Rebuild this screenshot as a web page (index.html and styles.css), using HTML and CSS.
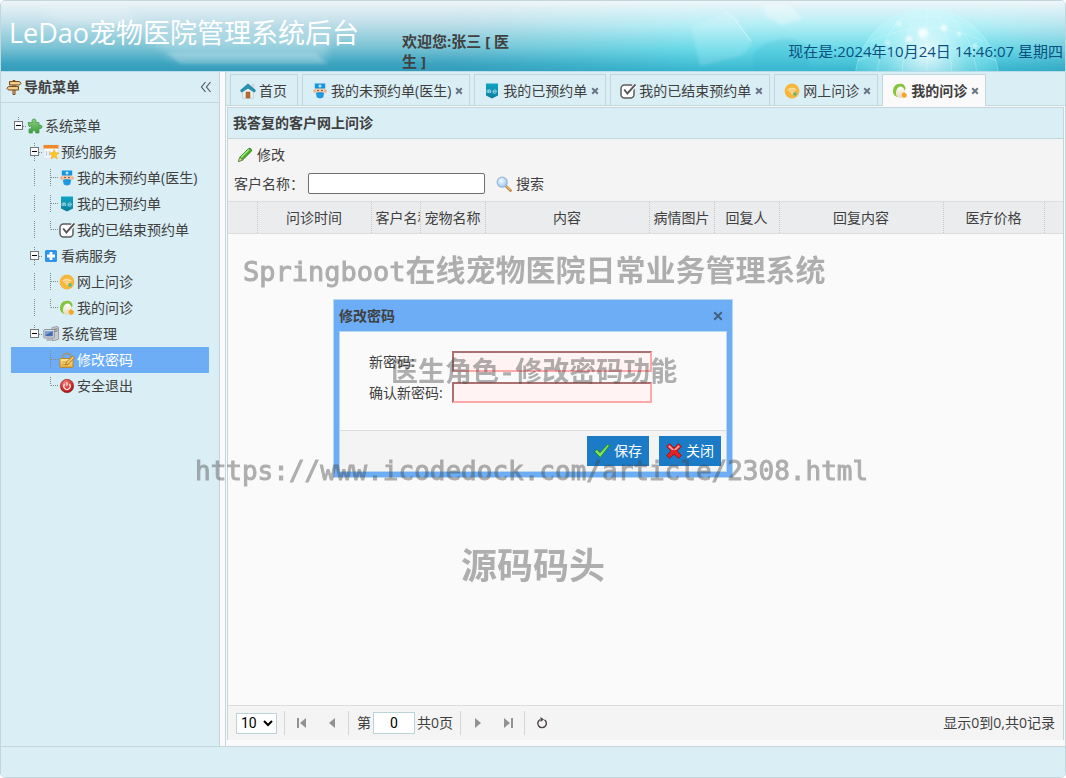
FILE: index.html
```html
<!DOCTYPE html>
<html lang="zh-CN">
<head>
<meta charset="utf-8">
<title>LeDao宠物医院管理系统后台</title>
<link rel="stylesheet" href="styles.css">
</head>
<body>
<svg class="defs" aria-hidden="true">
  <defs>
    <linearGradient id="gTeal" x2="0" y2="1"><stop offset="0" stop-color="#12a3c4"/><stop offset="1" stop-color="#087e9c"/></linearGradient>
    <linearGradient id="gGreen" x2="0" y2="1"><stop offset="0" stop-color="#8bd27c"/><stop offset="1" stop-color="#3f9e43"/></linearGradient>
    <linearGradient id="gGold" x2="0" y2="1"><stop offset="0" stop-color="#fff0a0"/><stop offset="1" stop-color="#eeb23a"/></linearGradient>
    <linearGradient id="gEgg" x2="0" y2="1"><stop offset="0" stop-color="#fff"/><stop offset="1" stop-color="#e6d9bd"/></linearGradient>
    <radialGradient id="gRed" cx=".4" cy=".3" r=".8"><stop offset="0" stop-color="#f08a84"/><stop offset=".6" stop-color="#cc2a28"/><stop offset="1" stop-color="#8d1012"/></radialGradient>
    <radialGradient id="gLens" cx=".4" cy=".35" r=".7"><stop offset="0" stop-color="#f4fbff"/><stop offset="1" stop-color="#8fc6f2"/></radialGradient>
  </defs>
  <symbol id="i-sign" viewBox="0 0 16 16"><g fill="#e9bd79" stroke="#7c4f1c"><path d="M7 1.500h2v14H7z"/><path d="M3.500 2.500h10l1.500 1.800-1.500 1.700h-10z"/><path d="M12.500 7.500h-10L.8 9.300l1.700 1.700h10z"/></g><path d="M5 4.200h8M3 9.200h8" stroke="#f7dfae"/></symbol>
  <symbol id="i-puzzle" viewBox="0 0 16 16"><path d="M1 4.500h4.500C4.600 3 5 1 7 1s2.500 2 1.600 3.500H12v3c1.200-.8 3-.4 3 1.300s-1.700 2.200-3 1.400V15H8.600c.5-1.500-.3-2.400-1.600-2.400S5 13.500 5.500 15H2v-4.200c1.400.7 2.300 0 2.300-1.200S3.200 7.900 2 8.500z" fill="url(#gGreen)" stroke="#3c9343" stroke-width=".7"/></symbol>
  <symbol id="i-cal" viewBox="0 0 16 16"><path d="M1 1h14v13H1z" fill="#f8fafc" stroke="#d5dde5" stroke-width=".6"/><path d="M.5 1h15v3.500H.5z" fill="#ee8a2c"/><path d="M3.500 7v5M6.500 7v5" stroke="#c3cbe8" stroke-width="1.500"/><path d="M11.200 5.500l1.400 3.100 3.300.4-2.500 2.300.7 3.500-2.900-1.700-3.100 1.700.7-3.500L6.400 9l3.400-.4z" fill="#fbc523" stroke="#efa51d" stroke-width=".5"/></symbol>
  <symbol id="i-doc" viewBox="0 0 16 16"><circle cx="3" cy="8" r="1.800" fill="#f0a982"/><circle cx="13" cy="8" r="1.800" fill="#f0a982"/><path d="M3.500 5h9v4.500c0 1.500-2 2-4.500 2s-4.500-.5-4.500-2z" fill="#fac9a4"/><path d="M2.800.5h10.400v5H2.800z" fill="#1495e4"/><path d="M8 1.500v3M6.500 3h3" stroke="#fff"/><circle cx="6" cy="7.500" r=".8" fill="#444"/><circle cx="10" cy="7.500" r=".8" fill="#444"/><path d="M3.800 10c3-1.200 5.400-1.200 8.400 0l-1 4.500-3.200 1-3.200-1z" fill="#1f9ae2"/></symbol>
  <symbol id="i-me" viewBox="0 0 16 16"><path d="M2 .5h12v12L8 15.500l-6-3z" fill="url(#gTeal)"/><path d="M3.200 10V7.500c0-1 1.700-1 1.700 0V10 7.500c0-1 1.700-1 1.700 0V10M9 8.700h3.500c0-2.500-3.500-2.500-3.500 0s2.500 1.500 3.300 1" fill="none" stroke="#b7e4ee" stroke-width=".8"/></symbol>
  <symbol id="i-check" viewBox="0 0 16 16"><rect x="1" y="2" width="13" height="13" rx="3.500" fill="#fff" stroke="#5c5c5c" stroke-width="1.500"/><path d="M4.200 6.800l3.300 4L15.500 1.500" fill="none" stroke="#fff" stroke-width="4"/><path d="M4.200 6.500l3.200 4L15.500 1.500" fill="none" stroke="#555" stroke-width="1.900"/></symbol>
  <symbol id="i-plus" viewBox="0 0 16 16"><rect x="2" y="2" width="12" height="12" rx="1.500" fill="#2f93ea"/><path d="M8 4v8M4 8h8" stroke="#fff" stroke-width="2.800"/></symbol>
  <symbol id="i-wifi" viewBox="0 0 16 16"><circle cx="8" cy="8" r="7.400" fill="#f6b73c"/><path d="M3.500 6.500c2.500-2.300 6.500-2.300 9 0L8 11.500z" fill="#fde2a0"/><path d="M4.600 8c2-1.600 4.800-1.600 6.800 0M6 9.500c1.200-.8 2.800-.8 4 0" stroke="#f1b851" fill="none" stroke-width=".8"/><circle cx="11" cy="11" r="1.800" fill="#57b98c"/></symbol>
  <symbol id="i-egg" viewBox="0 0 16 16"><path d="M1 8.500C1 3.500 4 .8 8 .8c3.500 0 5.500 2 5.500 5.200L10 13l-5 1C2.500 13 1 11 1 8.500z" fill="#86c440"/><path d="M4 10c0-3.500 2-6.500 4.500-6.500S13 6.500 13 10s-2 4.800-4.500 4.800S4 13.500 4 10z" fill="url(#gEgg)"/><path d="M9.500 11l2.500-2 3 2.500-.7 2.500-2.500 1-1.800-1.500z" fill="#f6a528"/></symbol>
  <symbol id="i-pc" viewBox="0 0 16 16"><path d="M9 1.500l5-1 1.500.8v12l-4 1.200H9z" fill="#c9ccd0" stroke="#83878d" stroke-width=".7"/><path d="M10.500 3.500l4-.7M10.500 5.500l4-.7" stroke="#777"/><rect x=".8" y="3.500" width="10.500" height="8.500" rx=".8" fill="#dadde1" stroke="#7d8289" stroke-width=".8"/><path d="M2.300 5h7.500v5.300H2.300z" fill="#456cae"/><path d="M2.300 5h7.500L2.300 9z" fill="#7fa4d9"/><path d="M4.500 12h3l1.500 2.800H3z" fill="#aeb2b8"/></symbol>
  <symbol id="i-lock" viewBox="0 0 16 16"><path d="M3.500 7V5.500c0-5 8-5.500 8.500-.5V7" fill="none" stroke="#9a9a8c" stroke-width="1.800"/><rect x="1" y="6.500" width="13" height="8.800" rx=".8" fill="url(#gGold)" stroke="#bf8424"/><path d="M3 10h5M3 12.500h4" stroke="#d59a35"/><path d="M6.500 13l1-3L13.500 4l2 1.800-6 6.300z" fill="#f2c56b" stroke="#9c661b" stroke-width=".8"/></symbol>
  <symbol id="i-power" viewBox="0 0 16 16"><circle cx="8" cy="8" r="6.700" fill="url(#gRed)" stroke="#962323" stroke-width=".6"/><path d="M5.700 6a3.200 3.200 0 1 0 4.600 0M8 4.200v3.600" fill="none" stroke="#fbe5e3" stroke-width="1.200"/></symbol>
  <symbol id="i-home" viewBox="0 0 16 16"><path d="M12 1.500h2V6h-2z" fill="#dfe4e6" stroke="#b0b9bd" stroke-width=".4"/><path d="M2.800 8L8 3.500 13.200 8v7.300H2.800z" fill="#eef2f3" stroke="#b2bcc0" stroke-width=".6"/><path d="M8 .8L.2 7.600l1.500 1.600L8 5.300l6.300 3.900 1.500-1.600z" fill="#2594b4" stroke="#167391" stroke-width=".5"/><path d="M6 9h4v6H6z" fill="#b96d31" stroke="#935020" stroke-width=".5"/></symbol>
  <symbol id="i-pencil" viewBox="0 0 16 16"><path d="M1.500 14.500l1.200-4L11.500 1.700c1.300-1.300 4 1 2.800 2.600L5.500 13z" fill="#4caf2c" stroke="#217516" stroke-width=".9"/><path d="M4 10.500l8-8" stroke="#a8e67e" stroke-width="1.500"/><path d="M1.500 14.500l1.200-4L5.500 13z" fill="#e6dfb2" stroke="#56772c" stroke-width=".5"/></symbol>
  <symbol id="i-search" viewBox="0 0 16 16"><path d="M10 10l4.500 4.500" stroke="#b98040" stroke-width="2.600" stroke-linecap="round"/><path d="M10.500 10l4 4" stroke="#eeb46a" stroke-width="1.300"/><circle cx="6.200" cy="6.200" r="5" fill="url(#gLens)" stroke="#9db8d8" stroke-width="1.300"/></symbol>
  <symbol id="i-ok" viewBox="0 0 16 16"><path d="M.6 8.500L3 6.500l3 3.200L13.500 1.500l2.200.8L6.300 14.500z" fill="#86e25d" stroke="#168421" stroke-width=".9"/></symbol>
  <symbol id="i-no" viewBox="0 0 16 16"><path d="M3.500.7L8 5 12.500.7l2.800 2.800L11 8l4.300 4.500-2.800 2.800L8 11l-4.500 4.300L.7 12.500 5 8 .7 3.500z" fill="#e32528" stroke="#9e1015" stroke-width=".9" stroke-linejoin="round"/><path d="M3.500 2.200L8 6.800l4.500-4.600 1.300 1.300L10 7H6L2.200 3.500z" fill="#f6a6a4"/></symbol>
  <symbol id="i-x" viewBox="0 0 8 8"><path d="M1.200 1.200l5.600 5.600M6.800 1.200L1.200 6.800" stroke="currentColor" stroke-width="2"/></symbol>
  <symbol id="i-x-thin" viewBox="0 0 8 8"><path d="M1 1l6 6M7 1L1 7" stroke="currentColor" stroke-width="1.500"/></symbol>
  <symbol id="t-box" viewBox="0 0 16 18"><path d="M7.500 0v5M7.500 13v5M12 9.500h4" class="dots"/><rect x="3.500" y="4.500" width="8" height="8" fill="#f7fbfc" stroke="#777"/><path d="M5 8.500h5" stroke="#000"/></symbol>
  <symbol id="t-root" viewBox="0 0 16 18"><path d="M7.500 0v4M12 9.500h4" class="dots"/><rect x="3.500" y="4.500" width="8" height="8" fill="#f7fbfc" stroke="#777"/><path d="M5 8.500h5" stroke="#000"/></symbol>
  <symbol id="t-line" viewBox="0 0 16 18"><path d="M7.500 0v18" class="dots"/></symbol>
  <symbol id="t-join" viewBox="0 0 16 18"><path d="M7.500 0v18M8 8.500h8" class="dots"/></symbol>
  <symbol id="t-end" viewBox="0 0 16 18"><path d="M7.500 0v8.500M8 8.500h8" class="dots"/></symbol>
</svg>

<div class="app">
  <header class="banner">
    <svg class="banner-art" viewBox="0 0 1064 70" preserveAspectRatio="none" aria-hidden="true">
      <defs>
        <linearGradient id="skyL" x2="0" y2="1"><stop offset="0" stop-color="#eef5f9"/><stop offset=".3" stop-color="#c3e0ea"/><stop offset=".65" stop-color="#7cc4d5"/><stop offset=".9" stop-color="#3ba3c0"/><stop offset="1" stop-color="#359cba"/></linearGradient>
        <linearGradient id="skyR" x2="0" y2="1"><stop offset="0" stop-color="#eef5f9"/><stop offset=".35" stop-color="#b2eef5"/><stop offset=".7" stop-color="#65d8e7"/><stop offset="1" stop-color="#38b6cf"/></linearGradient>
        <linearGradient id="fade"><stop offset=".42" stop-color="#000"/><stop offset=".66" stop-color="#fff"/><stop offset=".92" stop-color="#fff"/><stop offset="1" stop-color="#888"/></linearGradient>
        <mask id="fadeMask"><rect width="1064" height="70" fill="url(#fade)"/></mask>
        <radialGradient id="globe" cx=".5" cy=".3" r=".6"><stop offset="0" stop-color="#fff" stop-opacity=".85"/><stop offset=".5" stop-color="#c5fbff" stop-opacity=".4"/><stop offset="1" stop-color="#9ff" stop-opacity=".12"/></radialGradient>
        <filter id="soft" x="-20%" y="-80%" width="140%" height="260%"><feGaussianBlur stdDeviation="5"/></filter>
        <filter id="softer" x="-20%" y="-20%" width="140%" height="140%"><feGaussianBlur stdDeviation="1.500"/></filter>
      </defs>
      <rect width="1064" height="70" fill="url(#skyL)"/>
      <rect width="1064" height="70" fill="url(#skyR)" mask="url(#fadeMask)"/>
      <g fill="#fff" opacity=".22" filter="url(#soft)"><path d="M35 8h90l15 14H60zM140 32h190l-5 28H175z"/></g>
      <path d="M165 52h150l12 11H180z" fill="#fff" opacity=".18" filter="url(#softer)"/>
      <g filter="url(#softer)">
        <path d="M690 26l36-14q8 2 11 9l14 20q-4 10-12 14l-40 10z" fill="#fff" opacity=".14"/>
        <path d="M762 4h26l14 14-22 6-14-8z" fill="#fff" opacity=".3"/>
        <path d="M752 52q14-15 40-14l16 8v24h-56z" fill="#2bb3cb" opacity=".25"/>
      </g>
      <path d="M724 11q10 4 13 12l13 17" fill="none" stroke="#e8fdff" opacity=".6"/>
      <circle cx="926" cy="80" r="72" fill="url(#globe)"/>
      <g fill="none" stroke="#e5feff" opacity=".4" stroke-width=".7"><circle cx="926" cy="80" r="72"/><ellipse cx="926" cy="80" rx="50" ry="72"/><ellipse cx="926" cy="80" rx="25" ry="72"/><path d="M856 60q70-30 140 0M870 40q56-26 112 0M890 22q36-14 72 0M926 8v62"/></g>
      <g fill="#fff" opacity=".8" filter="url(#softer)"><circle cx="922" cy="32" r="5"/><circle cx="898" cy="23" r="2"/><circle cx="943" cy="27" r="3"/><circle cx="958" cy="33" r="2"/><circle cx="908" cy="38" r="3"/><circle cx="974" cy="45" r="2"/><circle cx="887" cy="42" r="2"/></g>
    </svg>
    <h1 class="brand">LeDao宠物医院管理系统后台</h1>
    <p class="welcome">欢迎您:张三 [ 医生 ]</p>
    <p class="clock">现在是:2024年10月24日 14:46:07 星期四</p>
  </header>

  <div class="middle">
    <aside class="sidebar">
      <div class="side-head">
        <svg class="ico"><use href="#i-sign"/></svg>
        <h2 class="side-title">导航菜单</h2>
        <button class="collapse" type="button" aria-label="收起"><svg viewBox="0 0 12 12"><path d="M5.500 1L1.500 6l4 5M10.500 1l-4 5 4 5" fill="none" stroke="#4f5b60" stroke-width="1.200"/></svg></button>
      </div>
      <nav class="tree">
        <a class="node" href="#"><svg class="cell"><use href="#t-root"/></svg><svg class="ico"><use href="#i-puzzle"/></svg><span class="node-text">系统菜单</span></a>
        <a class="node" href="#"><i class="cell"></i><svg class="cell"><use href="#t-box"/></svg><svg class="ico"><use href="#i-cal"/></svg><span class="node-text">预约服务</span></a>
        <a class="node" href="#"><i class="cell"></i><svg class="cell"><use href="#t-line"/></svg><svg class="cell"><use href="#t-join"/></svg><svg class="ico"><use href="#i-doc"/></svg><span class="node-text">我的未预约单(医生)</span></a>
        <a class="node" href="#"><i class="cell"></i><svg class="cell"><use href="#t-line"/></svg><svg class="cell"><use href="#t-join"/></svg><svg class="ico"><use href="#i-me"/></svg><span class="node-text">我的已预约单</span></a>
        <a class="node" href="#"><i class="cell"></i><svg class="cell"><use href="#t-line"/></svg><svg class="cell"><use href="#t-end"/></svg><svg class="ico"><use href="#i-check"/></svg><span class="node-text">我的已结束预约单</span></a>
        <a class="node" href="#"><i class="cell"></i><svg class="cell"><use href="#t-box"/></svg><svg class="ico"><use href="#i-plus"/></svg><span class="node-text">看病服务</span></a>
        <a class="node" href="#"><i class="cell"></i><svg class="cell"><use href="#t-line"/></svg><svg class="cell"><use href="#t-join"/></svg><svg class="ico"><use href="#i-wifi"/></svg><span class="node-text">网上问诊</span></a>
        <a class="node" href="#"><i class="cell"></i><svg class="cell"><use href="#t-line"/></svg><svg class="cell"><use href="#t-end"/></svg><svg class="ico"><use href="#i-egg"/></svg><span class="node-text">我的问诊</span></a>
        <a class="node" href="#"><i class="cell"></i><svg class="cell"><use href="#t-root"/></svg><svg class="ico"><use href="#i-pc"/></svg><span class="node-text">系统管理</span></a>
        <a class="node selected" href="#"><i class="cell"></i><i class="cell"></i><svg class="cell"><use href="#t-join"/></svg><svg class="ico"><use href="#i-lock"/></svg><span class="node-text">修改密码</span></a>
        <a class="node" href="#"><i class="cell"></i><i class="cell"></i><svg class="cell"><use href="#t-end"/></svg><svg class="ico"><use href="#i-power"/></svg><span class="node-text">安全退出</span></a>
      </nav>
    </aside>

    <main class="center">
      <div class="tabs">
        <div class="tab"><svg class="ico"><use href="#i-home"/></svg><a class="tab-link" href="#">首页</a></div>
        <div class="tab closable"><svg class="ico"><use href="#i-doc"/></svg><a class="tab-link" href="#">我的未预约单(医生)</a><button class="tab-x" type="button" aria-label="关闭标签"><svg><use href="#i-x"/></svg></button></div>
        <div class="tab closable"><svg class="ico"><use href="#i-me"/></svg><a class="tab-link" href="#">我的已预约单</a><button class="tab-x" type="button" aria-label="关闭标签"><svg><use href="#i-x"/></svg></button></div>
        <div class="tab closable"><svg class="ico"><use href="#i-check"/></svg><a class="tab-link" href="#">我的已结束预约单</a><button class="tab-x" type="button" aria-label="关闭标签"><svg><use href="#i-x"/></svg></button></div>
        <div class="tab closable"><svg class="ico"><use href="#i-wifi"/></svg><a class="tab-link" href="#">网上问诊</a><button class="tab-x" type="button" aria-label="关闭标签"><svg><use href="#i-x"/></svg></button></div>
        <div class="tab closable active"><svg class="ico"><use href="#i-egg"/></svg><a class="tab-link" href="#">我的问诊</a><button class="tab-x" type="button" aria-label="关闭标签"><svg><use href="#i-x"/></svg></button></div>
      </div>

      <section class="panel">
        <h2 class="panel-title">我答复的客户网上问诊</h2>
        <div class="toolbar">
          <div class="tool-row"><button class="tool" type="button"><svg class="ico"><use href="#i-pencil"/></svg>修改</button></div>
          <div class="tool-row">
            <label for="customer">客户名称：</label>
            <input class="search-input" id="customer" type="text">
            <button class="tool" type="button"><svg class="ico"><use href="#i-search"/></svg>搜索</button>
          </div>
        </div>
        <div class="grid">
          <table class="grid-table">
            <colgroup><col class="c-num"><col class="c-time"><col class="c-cust"><col class="c-short"><col class="c-long"><col class="c-short"><col class="c-short"><col class="c-long"><col class="c-price"><col></colgroup>
            <thead><tr><th></th><th>问诊时间</th><th>客户名称</th><th>宠物名称</th><th>内容</th><th>病情图片</th><th>回复人</th><th>回复内容</th><th>医疗价格</th><th></th></tr></thead>
          </table>
        </div>
        <div class="pager">
          <select class="page-size" aria-label="每页条数"><option>10</option><option>20</option><option>50</option></select>
          <span class="sep"></span>
          <button class="pg" type="button" aria-label="首页"><svg viewBox="0 0 12 12"><path d="M1 1h2v10H1zM10 1v10L4 6z"/></svg></button>
          <button class="pg" type="button" aria-label="上一页"><svg viewBox="0 0 12 12"><path d="M9 1v10L3 6z"/></svg></button>
          <span class="sep"></span>
          <span class="page-box"><label for="page">第</label><input class="page-input" id="page" type="text" value="0"><span>共0页</span></span>
          <span class="sep"></span>
          <button class="pg" type="button" aria-label="下一页"><svg viewBox="0 0 12 12"><path d="M3 1v10l6-5z"/></svg></button>
          <button class="pg" type="button" aria-label="末页"><svg viewBox="0 0 12 12"><path d="M9 1h2v10H9zM2 1v10l6-5z"/></svg></button>
          <span class="sep"></span>
          <button class="pg" type="button" aria-label="刷新"><svg viewBox="0 0 12 12"><path d="M8.500 2.800A4.300 4.300 0 1 1 4 2.600" fill="none" stroke="#4d4444" stroke-width="1.400"/><path d="M4.500 0v5L8 2.500z" fill="#4d4444"/></svg></button>
          <span class="page-info">显示0到0,共0记录</span>
        </div>
      </section>
    </main>
  </div>
  <footer class="foot"></footer>

  <form class="dialog" role="dialog" aria-labelledby="dlg-title">
    <div class="dlg-head"><h2 class="dlg-title" id="dlg-title">修改密码</h2><button class="dlg-x" type="button" aria-label="关闭窗口"><svg><use href="#i-x-thin"/></svg></button></div>
    <div class="dlg-body">
      <label for="pw1">新密码:</label><input class="pw" id="pw1" type="password">
      <label for="pw2">确认新密码:</label><input class="pw" id="pw2" type="password">
    </div>
    <div class="dlg-foot">
      <button class="btn" type="button"><svg class="ico"><use href="#i-ok"/></svg>保存</button>
      <button class="btn" type="button"><svg class="ico"><use href="#i-no"/></svg>关闭</button>
    </div>
  </form>

  <div class="mark mark-title"><span class="mono">Springboot</span>在线宠物医院日常业务管理系统</div>
  <div class="mark mark-role">医生角色<span class="mono">-</span>修改密码功能</div>
  <div class="mark mark-url mono">https://www.icodedock.com/article/2308.html</div>
  <div class="mark mark-site">源码码头</div>
</div>
</body>
</html>
```

FILE: styles.css
```css
* { box-sizing: border-box; }

body {
  margin: 0;
  color: #404040;
  background: #fff;
  font: 14px/20px "Open Sans", "Noto Sans CJK SC", sans-serif;
}

h1, h2, p { margin: 0; font-size: inherit; }
a { color: inherit; text-decoration: none; }
button { padding: 0; border: 0; background: none; color: inherit; font: inherit; }
button svg { display: block; }

.defs { position: absolute; width: 0; height: 0; }
.dots { fill: none; stroke: #80898c; stroke-dasharray: 1 1; }
.ico { flex: none; width: 16px; height: 16px; }

.app {
  position: relative;
  display: flex;
  flex-direction: column;
  min-height: 100vh;
  overflow: hidden;
  border: 1px solid #c2d6dc;
  border-radius: 5px;
  background: #fafafa;
}

/* banner */
.banner {
  position: relative;
  display: flex;
  height: 71px;
  border-bottom: 1px solid #b9dde8;
}
.banner-art { position: absolute; inset: 0; width: 100%; height: 100%; }
.brand, .welcome, .clock { position: relative; }
.brand {
  width: 401px;
  padding: 12px 0 0 8px;
  color: #fff;
  font-size: 27px;
  font-weight: 400;
  line-height: 40px;
  white-space: nowrap;
}
.welcome { width: 120px; padding-top: 30px; font-size: 15px; font-weight: 700; }
.clock {
  margin-left: auto;
  padding: 40px 2px 0 0;
  color: #0a5080;
  font-size: 15px;
  white-space: nowrap;
}

/* sidebar */
.middle { display: flex; flex: 1; }
.sidebar {
  flex: none;
  width: 219px;
  margin-right: 5px;
  border-right: 1px solid #c2d6dc;
  background: #daeef5;
}
.side-head {
  display: flex;
  align-items: center;
  height: 31px;
  padding: 0 7px 0 5px;
  border-bottom: 1px solid #c2d6dc;
}
.side-title { margin-left: 2px; }
.collapse { margin-left: auto; }
.collapse svg { width: 12px; height: 12px; }
.tree { padding: 10px; }
.node { display: flex; align-items: center; height: 26px; }
.cell { flex: none; width: 16px; height: 18px; }
.node-text { padding-left: 2px; white-space: nowrap; }
.selected { background: #6cadf5; color: #fff; }

/* tabs */
.center {
  display: flex;
  flex: 1;
  flex-direction: column;
  min-width: 0;
  border-left: 1px solid #c2d6dc;
}
.tabs {
  display: flex;
  gap: 4px;
  height: 34px;
  padding: 2px 4px 0;
  border-bottom: 1px solid #c2d6dc;
  background: #daeef5;
}
.tab {
  display: flex;
  align-items: center;
  height: 32px;
  padding: 0 10px 0 9px;
  border: 1px solid #c2d6dc;
  border-bottom: 0;
  white-space: nowrap;
}
.tab-link { margin-left: 3px; }
.closable { padding-right: 6px; }
.tab-x { margin-left: 4px; color: #6b7588; }
.tab-x svg { width: 8px; height: 8px; }
.active { background: #fafafa; font-weight: 700; }

/* panel */
.panel {
  display: flex;
  flex: 1;
  flex-direction: column;
  margin: 1px 1px 6px;
  border: 1px solid #c2d6dc;
  border-bottom: 0;
}
.panel-title {
  padding: 5px;
  border-bottom: 1px solid #c2d6dc;
  background: #daeef5;
}
.toolbar {
  display: grid;
  row-gap: 2px;
  padding: 2px 6px 4px;
  border-bottom: 1px solid #ddd;
  background: #f4f4f4;
}
.tool-row { display: flex; align-items: center; height: 27px; }
.tool { display: flex; align-items: center; gap: 4px; margin-left: 3px; }
.search-input {
  width: 177px;
  height: 21px;
  margin: 0 8px 0 4px;
  border: 1px solid #707070;
  border-radius: 2px;
  background: #fff;
}
.grid { flex: 1; }
.grid-table {
  width: 100%;
  border-collapse: collapse;
  border-bottom: 1px solid #ddd;
  background: #eaecee;
  table-layout: fixed;
}
.grid-table th {
  height: 31px;
  padding: 1px 4px 0;
  overflow: hidden;
  border-right: 1px dotted #c8c8c8;
  font-weight: 400;
  white-space: nowrap;
}
.grid-table th:last-child { border-right: 0; }
.c-num { width: 29px; }
.c-time { width: 114px; }
.c-cust { width: 49px; }
.c-short { width: 65px; }
.c-long { width: 164px; }
.c-price { width: 101px; }

/* pager */
.pager {
  display: flex;
  align-items: center;
  height: 35px;
  padding: 0 8px;
  border-top: 1px solid #ddd;
  background: #f4f4f4;
}
.page-size {
  width: 41px;
  height: 21px;
  margin-right: 6px;
  border: 1px solid #bcd3d9;
  background: #fff;
  color: #000;
  font: 14px "Roboto", sans-serif;
}
.sep { width: 1px; height: 24px; margin: 0 2px 0 1px; background: #d5d5d5; }
.pg { display: grid; width: 30px; height: 24px; place-items: center; }
.pg svg { width: 12px; height: 12px; fill: #929292; }
.page-box { display: flex; align-items: center; gap: 2px; margin: 0 6px; }
.page-input {
  width: 42px;
  height: 22px;
  border: 1px solid #bcd3d9;
  background: #fff;
  color: #000;
  font: 14px "Roboto", sans-serif;
  text-align: center;
}
.page-info { margin-left: auto; }

.foot { height: 31px; border-top: 1px solid #c2d6dc; background: #daeef5; }

/* dialog */
.dialog {
  position: absolute;
  top: 298px;
  left: 332px;
  width: 400px;
  padding: 0 5px 5px;
  border: 1px solid #b5d8ec;
  background: #6cadf5;
}
.dlg-head { display: flex; align-items: center; justify-content: space-between; height: 31px; padding-right: 4px; }
.dlg-x { color: #40607f; }
.dlg-x svg { width: 10px; height: 10px; }
.dlg-body {
  display: grid;
  grid-template-columns: 83px 200px;
  row-gap: 10px;
  align-items: center;
  padding: 19px 29px 27px;
  border: 1px solid #b5d8ec;
  border-bottom: 0;
  background: #fafafa;
}
.pw { height: 21px; border: 2px inset #ffa8a8; background: #fff3f3; }
.dlg-foot {
  display: flex;
  gap: 10px;
  justify-content: flex-end;
  padding: 5px;
  border: 1px solid #b5d8ec;
  border-top-color: #ddd;
  background: #f4f4f4;
}
.btn {
  display: flex;
  align-items: center;
  justify-content: center;
  gap: 4px;
  width: 62px;
  height: 30px;
  background: #1b7bc6;
  color: #fff;
}

/* overlay captions */
.mark {
  position: absolute;
  color: #464646;
  font-family: "Noto Sans CJK SC", sans-serif;
  font-weight: 700;
  line-height: 40px;
  opacity: 0.42;
  white-space: nowrap;
  pointer-events: none;
}
.mono {
  font-family: "DejaVu Sans Mono", monospace;
  font-weight: 400;
  -webkit-text-stroke: 1px #464646;
}
.mark-title { top: 247px; left: 242px; font-size: 30px; }
.mark-title .mono { font-size: 27px; }
.mark-role { top: 349px; left: 390px; font-size: 27px; }
.mark-url { top: 450px; left: 194px; font-size: 26px; }
.mark-site { top: 542px; left: 460px; font-size: 36px; }
```
